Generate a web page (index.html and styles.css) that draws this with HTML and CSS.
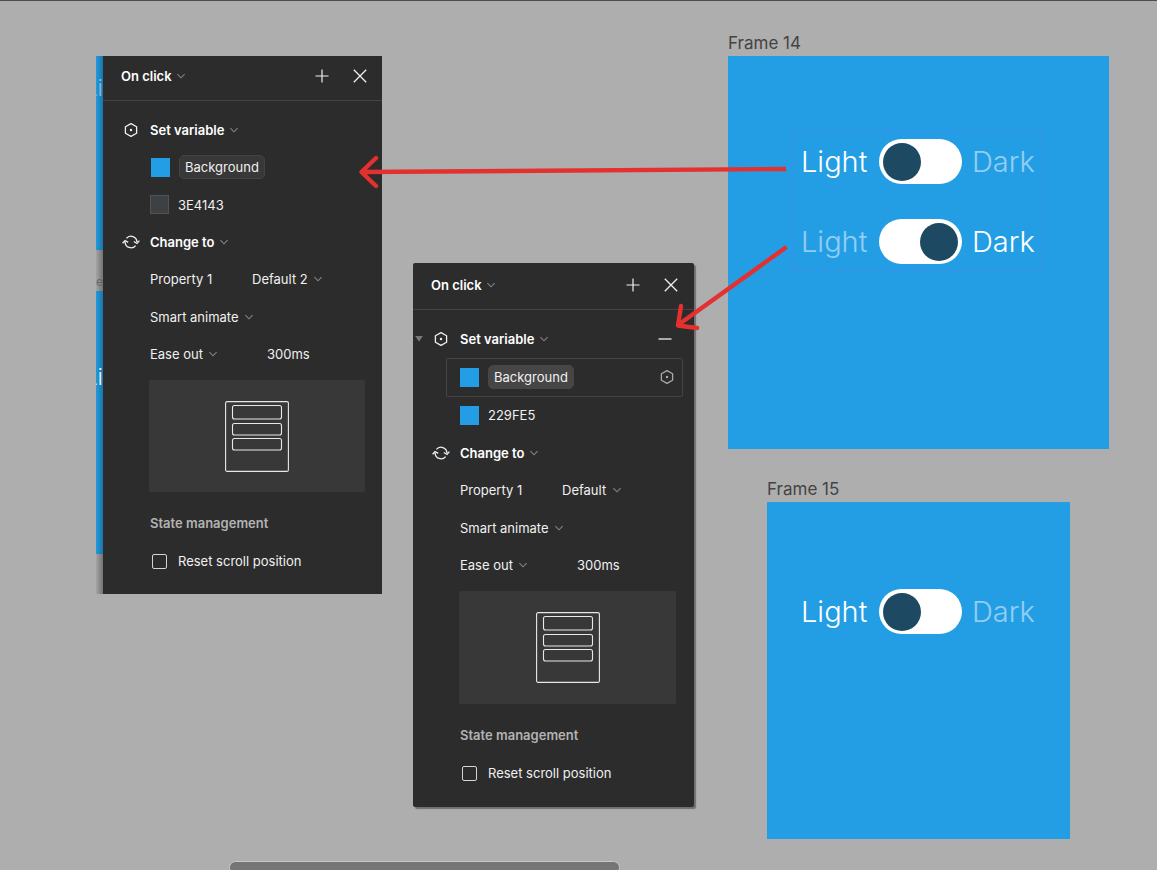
FILE: index.html
```html
<!DOCTYPE html>
<html lang="en">
<head>
<meta charset="utf-8">
<title>Theme toggle prototype</title>
<link rel="stylesheet" href="styles.css">
</head>
<body>
<svg class="sprite" aria-hidden="true">
  <symbol id="chevron" viewBox="0 0 8 8"><path d="M.4 2.2 4 5.8 7.6 2.2" fill="none" stroke="#858585" stroke-width="1.1"/></symbol>
  <symbol id="hexagon" viewBox="0 0 18 18"><path d="M9 2.6 14.6 5.7V12.3L9 15.4 3.4 12.3V5.7Z" fill="none" stroke="currentColor" stroke-width="1.3" stroke-linejoin="round"/><circle cx="9" cy="9" r="1.2" fill="currentColor"/></symbol>
  <symbol id="cycle" viewBox="0 0 18 18"><path d="M4.4 5.4A5.900 5.900 0 0 1 14.900 9M13.600 12.600A5.900 5.900 0 0 1 3.100 9M.6 10.200 3 7.500 6.200 9.400M11.800 8.500 15 10.500 17.400 7.700" fill="none" stroke="currentColor" stroke-width="1.3"/></symbol>
  <symbol id="plus" viewBox="0 0 24 24"><path d="M12 5.5V18.5M5.5 12H18.5" stroke="currentColor" stroke-width="1.2"/></symbol>
  <symbol id="close" viewBox="0 0 24 24"><path d="M5.8 5.8 18.2 18.2M18.2 5.8 5.8 18.2" stroke="currentColor" stroke-width="1.3"/></symbol>
  <symbol id="minus" viewBox="0 0 24 24"><path d="M5.5 12H18.5" stroke="currentColor" stroke-width="1.3"/></symbol>
  <symbol id="page" viewBox="0 0 64 71"><g fill="none" stroke="#e8e8e8" stroke-width="1.1"><rect x=".6" y=".6" width="62.8" height="69.8" rx="1.5"/><rect x="7.5" y="4.5" width="49" height="13.5" rx="2"/><rect x="7.5" y="22.5" width="49" height="11.5" rx="2"/><rect x="7.5" y="37.5" width="49" height="11.5" rx="2"/></g></symbol>
</svg>

<main class="canvas">
  <div class="sliver" aria-hidden="true">
    <div class="sliver-frame sliver-top"><span class="faint">Li</span></div>
    <div class="sliver-gap">e</div>
    <div class="sliver-frame sliver-bottom"><span>Li</span></div>
  </div>

  <section class="panel panel-a" aria-label="Interaction to dark">
    <header class="panel-head">
      <label class="pick strong"><select aria-label="Trigger"><option>On click</option></select><svg class="chevron"><use href="#chevron"/></svg></label>
      <span class="tools">
        <button class="icon-button" aria-label="Add"><svg><use href="#plus"/></svg></button>
        <button class="icon-button" aria-label="Close"><svg><use href="#close"/></svg></button>
      </span>
    </header>
    <div class="rows">
      <div class="row action">
        <span></span>
        <svg class="glyph"><use href="#hexagon"/></svg>
        <label class="pick strong"><select aria-label="Action"><option>Set variable</option></select><svg class="chevron"><use href="#chevron"/></svg></label>
      </div>
      <div class="row variable"><span class="swatch blue"></span><button class="tag">Background</button></div>
      <div class="row value"><span class="swatch gray"></span><input class="field" aria-label="Value" value="3E4143"></div>
      <div class="row action">
        <span></span>
        <svg class="glyph"><use href="#cycle"/></svg>
        <label class="pick strong"><select aria-label="Second action"><option>Change to</option></select><svg class="chevron"><use href="#chevron"/></svg></label>
      </div>
      <div class="row pair"><label for="prop-a">Property 1</label><span class="pick"><select id="prop-a"><option>Default 2</option></select><svg class="chevron"><use href="#chevron"/></svg></span></div>
      <div class="row pair"><label class="pick"><select aria-label="Animation"><option>Smart animate</option></select><svg class="chevron"><use href="#chevron"/></svg></label></div>
      <div class="row pair"><label class="pick"><select aria-label="Easing"><option>Ease out</option></select><svg class="chevron"><use href="#chevron"/></svg></label><input class="field duration" aria-label="Duration" value="300ms"></div>
    </div>
    <div class="preview"><svg><use href="#page"/></svg></div>
    <div class="state">
      <h2>State management</h2>
      <label class="check"><input type="checkbox">Reset scroll position</label>
    </div>
  </section>

  <section class="panel panel-b" aria-label="Interaction to light">
    <header class="panel-head">
      <label class="pick strong"><select aria-label="Trigger"><option>On click</option></select><svg class="chevron"><use href="#chevron"/></svg></label>
      <span class="tools">
        <button class="icon-button" aria-label="Add"><svg><use href="#plus"/></svg></button>
        <button class="icon-button" aria-label="Close"><svg><use href="#close"/></svg></button>
      </span>
    </header>
    <div class="rows">
      <div class="row action">
        <span class="caret"></span>
        <svg class="glyph"><use href="#hexagon"/></svg>
        <label class="pick strong"><select aria-label="Action"><option>Set variable</option></select><svg class="chevron"><use href="#chevron"/></svg></label>
        <button class="icon-button" aria-label="Remove"><svg><use href="#minus"/></svg></button>
      </div>
      <div class="row variable outlined"><span class="swatch blue"></span><button class="tag">Background</button><svg class="glyph dim"><use href="#hexagon"/></svg></div>
      <div class="row value"><span class="swatch blue"></span><input class="field" aria-label="Value" value="229FE5"></div>
      <div class="row action">
        <span></span>
        <svg class="glyph"><use href="#cycle"/></svg>
        <label class="pick strong"><select aria-label="Second action"><option>Change to</option></select><svg class="chevron"><use href="#chevron"/></svg></label>
      </div>
      <div class="row pair"><label for="prop-b">Property 1</label><span class="pick"><select id="prop-b"><option>Default</option></select><svg class="chevron"><use href="#chevron"/></svg></span></div>
      <div class="row pair"><label class="pick"><select aria-label="Animation"><option>Smart animate</option></select><svg class="chevron"><use href="#chevron"/></svg></label></div>
      <div class="row pair"><label class="pick"><select aria-label="Easing"><option>Ease out</option></select><svg class="chevron"><use href="#chevron"/></svg></label><input class="field duration" aria-label="Duration" value="300ms"></div>
    </div>
    <div class="preview"><svg><use href="#page"/></svg></div>
    <div class="state">
      <h2>State management</h2>
      <label class="check"><input type="checkbox">Reset scroll position</label>
    </div>
  </section>

  <section class="frame frame-14">
    <h2 class="frame-name">Frame 14</h2>
    <div class="artboard">
      <div class="variants">
        <label class="mode"><span>Light</span><input class="switch" type="checkbox" role="switch"><span class="off">Dark</span></label>
        <label class="mode"><span class="off">Light</span><input class="switch" type="checkbox" role="switch" checked><span>Dark</span></label>
      </div>
    </div>
  </section>

  <section class="frame frame-15">
    <h2 class="frame-name">Frame 15</h2>
    <div class="artboard">
      <label class="mode"><span>Light</span><input class="switch" type="checkbox" role="switch"><span class="off">Dark</span></label>
    </div>
  </section>

  <svg class="arrows" viewBox="0 0 450 200" aria-hidden="true">
    <g fill="none" stroke="#e53030" stroke-width="4.4">
      <path d="M436 29 12 32M436.500 107 328 185"/>
      <path d="M26 18 11.500 32 26 46M331 166 328 185.500 347 188" stroke-linecap="round" stroke-linejoin="round"/>
    </g>
  </svg>
  <div class="scroll-thumb"></div>
</main>
</body>
</html>
```
FILE: styles.css
```css
* { box-sizing: border-box; }
body {
  margin: 0;
  background: #aeaeae;
  color: #f0f0f0;
  font: 13px/20px Inter, "Liberation Sans", sans-serif;
}
h2 { margin: 0; }
button, input, select {
  margin: 0;
  padding: 0;
  border: 0;
  background: none;
  color: inherit;
  font: inherit;
  appearance: none;
}
.sprite { position: absolute; width: 0; height: 0; }

.canvas {
  position: relative;
  min-height: 100vh;
  overflow: hidden;
  border-top: 1px solid #4c4c4c;
}

/* Canvas objects */
.sliver, .panel, .frame, .arrows, .scroll-thumb { position: absolute; }

.sliver {
  left: 96px;
  top: 55px;
  width: 7px;
  height: 538px;
  background: linear-gradient(90deg, #a4a4a4, #737373);
  display: flex;
  flex-direction: column;
}
.sliver-frame {
  display: flex;
  justify-content: flex-end;
  overflow: hidden;
  background: linear-gradient(90deg, #229add, #1b76ab);
  font-size: 23px;
  font-weight: 300;
  line-height: 36px;
}
.sliver-top { height: 194px; padding-top: 14px; }
.sliver-bottom { height: 263px; padding-top: 68px; }
.sliver-gap {
  height: 41px;
  padding-top: 22px;
  overflow: hidden;
  color: #666;
  font-size: 12px;
}
.faint { opacity: .5; }

.panel { background: #2c2c2c; }
.panel-a { left: 103px; top: 55px; width: 279px; }
.panel-b {
  left: 413px;
  top: 262px;
  width: 281px;
  border-radius: 2px;
  box-shadow: 2px 2px 1px #707070;
}
.panel-head {
  display: flex;
  align-items: center;
  justify-content: space-between;
  height: 45px;
  padding: 0 10px 4px 18px;
  border-bottom: 1px solid #444;
}
.panel-b .panel-head { height: 47px; padding: 0 11px 2px 18px; }
.tools { display: flex; gap: 14px; }
.icon-button { width: 24px; height: 24px; }
.icon-button svg { display: block; width: 24px; height: 24px; }

.pick { display: inline-flex; align-items: center; gap: 6px; }
.chevron { flex: none; width: 8px; height: 8px; pointer-events: none; }
.strong { gap: 5px; font-weight: 600; color: #fff; }

.rows {
  display: grid;
  grid-auto-rows: 1fr;
  height: 262px;
  margin-top: 10px;
}
.panel-b .rows { height: 264px; }
.row { display: flex; align-items: center; padding-left: 47px; white-space: nowrap; }
.action {
  display: grid;
  grid-template-columns: 17px 28px 1fr auto;
  padding: 0 17px 0 2px;
}
.glyph { width: 18px; height: 18px; }
.dim { margin-left: auto; color: #aaa; }
.caret {
  width: 8px;
  height: 6px;
  background: #777;
  clip-path: polygon(0 0, 100% 0, 50% 100%);
}
.variable, .value { gap: 9px; }
.variable { padding-left: 48px; }
.outlined {
  height: 39px;
  margin: 0 11px 0 33px;
  padding: 0 6px 0 13px;
  border: 1px solid #444;
  border-radius: 2px;
}
.swatch { width: 19px; height: 19px; }
.blue { background: #239ee5; }
.gray { background: #3e4143; border: 1px solid #505355; }
.tag {
  height: 24px;
  padding: 0 5px;
  border: 1px solid #434343;
  border-radius: 5px;
  background: #383838;
}
.outlined .tag { border-color: #464646; background: #464646; }
.field { width: 80px; height: 24px; }
.pair { display: grid; grid-template-columns: 102px 1fr; }
.duration { margin-left: 15px; }

.preview {
  display: grid;
  place-items: center;
  height: 112px;
  margin: 7px 17px 12px 46px;
  border-radius: 2px;
  background: #383838;
}
.panel-b .preview { height: 113px; margin-right: 18px; }
.preview svg { width: 64px; height: 71px; }
.state {
  display: grid;
  grid-auto-rows: 38px;
  align-items: center;
  padding: 0 0 14px 47px;
}
.panel-b .state { padding-bottom: 15px; }
.state h2 { color: #b3b3b3; font-size: 13px; font-weight: 600; }
.check { display: flex; align-items: center; gap: 11px; padding-left: 2px; }
.check input {
  width: 15px;
  height: 15px;
  border: 1px solid #d5d5d5;
  border-radius: 2px;
}

.frame-name { color: #444; font-size: 17px; font-weight: 400; line-height: 26px; }
.frame-14 { left: 728px; top: 29px; width: 381px; }
.frame-15 { left: 767px; top: 475px; width: 303px; }
.artboard { display: flex; align-items: flex-start; background: #239ee5; }
.frame-14 .artboard { height: 393px; padding: 75px 65px; }
.frame-15 .artboard { height: 337px; padding: 87px 34px; }
.variants {
  display: grid;
  gap: 35px;
  width: 251px;
  padding: 7px;
  border: 1px dashed #4b87ea;
}
.mode {
  display: grid;
  grid-template-columns: 68px 83px 62px;
  gap: 10px;
  align-items: center;
  color: #fff;
  font-size: 29px;
  font-weight: 300;
  line-height: 45px;
}
.off { opacity: .5; }
.switch {
  display: flex;
  align-items: center;
  width: 83px;
  height: 45px;
  padding: 0 4px;
  border-radius: 23px;
  background: #fff;
}
.switch::before {
  content: "";
  width: 38px;
  height: 38px;
  border-radius: 50%;
  background: #1e4962;
}
.switch:checked { justify-content: flex-end; }

.arrows { left: 350px; top: 139px; width: 450px; height: 200px; pointer-events: none; }
.scroll-thumb {
  left: 229px;
  bottom: -4px;
  width: 391px;
  height: 13px;
  border: 1px solid #c8c8c8;
  border-radius: 7px;
  background: #757575;
}
```
